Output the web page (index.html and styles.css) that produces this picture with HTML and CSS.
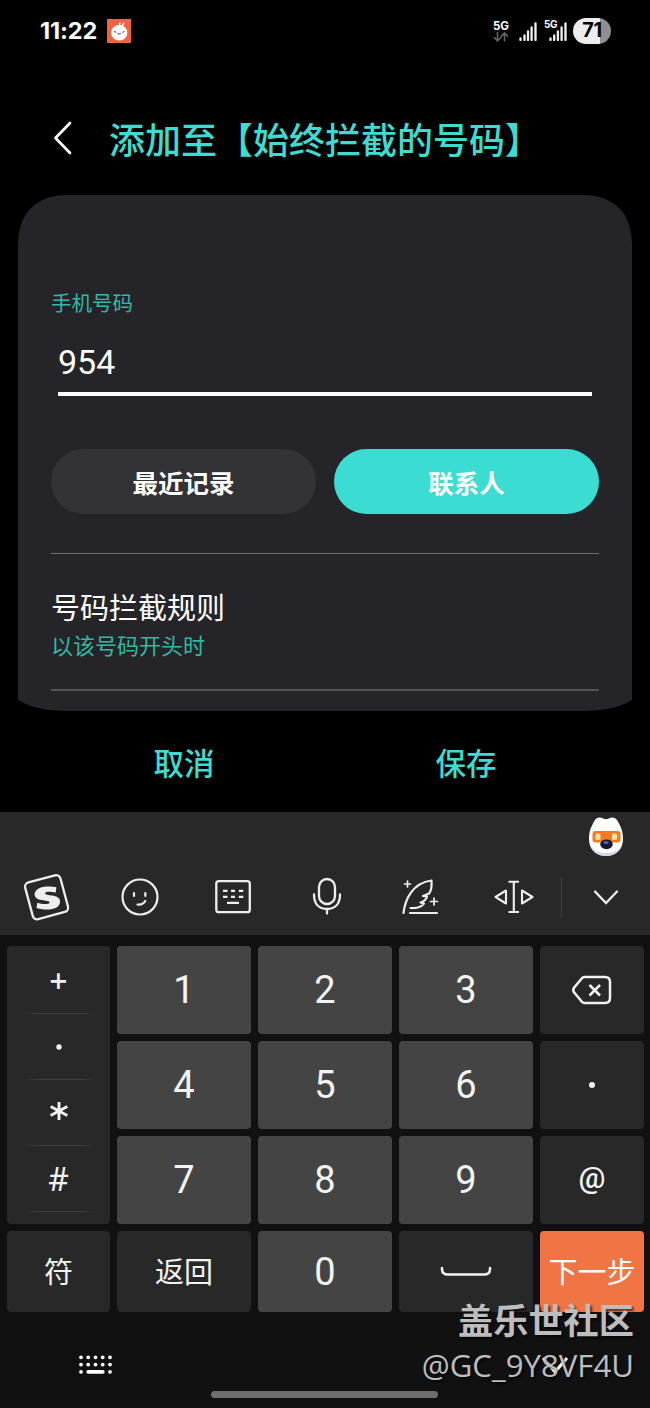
FILE: index.html
```html
<!DOCTYPE html>
<html lang="zh-CN">
<head>
<meta charset="utf-8">
<title>添加至【始终拦截的号码】</title>
<link rel="stylesheet" href="styles.css">
</head>
<body>
<main class="phone">
  <header class="status">
    <span class="time">11:22</span>
    <svg class="app-badge" width="24" height="24" viewBox="0 0 24 24"><rect width="24" height="24" fill="#ec6440"/><path d="M12 8 12.800 4M15 8 16.500 4.300" stroke="#fff" stroke-width="1.600" stroke-linecap="round"/><ellipse cx="12.2" cy="13.7" rx="8.1" ry="7.7" fill="#fff"/><path d="M7 12.5l2.2.8M17.4 12.5l-2.2.8M10.6 14.5q1.6 1 3.2 0" stroke="#49343a" stroke-width="1" fill="none"/></svg>
    <div class="indicators">
      <div class="net"><span class="gen">5G</span><svg width="16" height="10" viewBox="0 0 16 10"><path d="M4.5 0v8.5M1 5.2l3.5 3.6L8 5.2M11.5 9.500V1M8 4.600 11.500 1 15 4.600" fill="none" stroke="#666" stroke-width="1.6"/></svg></div>
      <svg class="bars" width="18" height="19" viewBox="0 0 18 19"><path d="M1.500 16.500v1.500M5.500 13.500V18M9 9.500V18M12.600 5.500V18M16.500 1.500V18" stroke="#f2f2f2" stroke-width="2.300" stroke-linecap="round"/></svg>
      <div class="sim2"><span class="gen2">5G</span><svg width="18" height="19" viewBox="0 0 18 19"><path d="M1.500 16.500v1.500M5.200 13.500V18M8.900 9.500V18M12.600 5.500V18M16.500 1.500V18" stroke="#f2f2f2" stroke-width="2.300" stroke-linecap="round"/></svg></div>
      <div class="battery">71</div>
    </div>
  </header>

  <div class="titlebar">
    <svg width="20" height="36" viewBox="0 0 20 36"><path d="M17 3 2.500 18 17 33" fill="none" stroke="#fff" stroke-width="2.700" stroke-linecap="round" stroke-linejoin="round"/></svg>
    <h1 class="title">添加至【始终拦截的号码】</h1>
  </div>

  <section class="card">
    <div class="label">手机号码</div>
    <div class="number">954</div>
    <div class="buttons">
      <div class="pill">最近记录</div>
      <div class="pill pill-primary">联系人</div>
    </div>
    <div class="rule">
      <div class="rule-title">号码拦截规则</div>
      <div class="rule-value">以该号码开头时</div>
    </div>
  </section>

  <div class="actions"><span>取消</span><span>保存</span></div>

  <section class="toolbar">
    <div class="mascot-row">
      <svg width="36" height="40" viewBox="0 0 36 40"><path d="M18 2.300C20 2.300 21.500.5 24.500.5c3.500 0 5 3 7 7C34 12 35.300 17 35 23c-.5 10-8 16-17 16S1.500 33 1 23C.7 17 2 12 4.500 7.500c2-4 3.500-7 7-7 3 0 4.500 1.800 6.500 1.800z" fill="#fff"/><path d="M2 28c3 6 9 8 16 8s13-2 16-8c-2 7-8 11-16 11S4 35 2 28z" fill="#cfd7ea"/><rect x="4.500" y="14" width="28" height="11.500" rx="3" fill="#f47a23"/><rect x="7.500" y="16.500" width="5" height="6.500" rx="1.500" fill="#ffe2a5"/><rect x="24" y="16.500" width="5" height="6.500" rx="1.500" fill="#ffe2a5"/><ellipse cx="18.500" cy="27.300" rx="6.200" ry="4.900" fill="#15183e"/><ellipse cx="18" cy="25.500" rx="2.700" ry="1.500" fill="#626780"/></svg>
    </div>
    <div class="tools">
      <svg width="50" height="50" viewBox="0 0 50 50"><rect x="7.300" y="6.200" width="36.500" height="38" rx="4.500" transform="rotate(-15 25.500 25)" fill="none" stroke="#eee" stroke-width="2.300"/><path transform="translate(.8 .7)" d="M34.600 14.500 34 19.800C29 18.600 23.500 18.600 23.300 20.500c-.2 1.500 3.500 1.600 7.600 2.400 5.500 1 7.700 3.300 7.300 6.700-.6 5-5.700 7.300-12.700 7.300-4.800 0-8.600-.8-10.800-1.600l.8-5.300c4.500 1.700 12 1.900 12.300-.2.200-1.600-4-1.600-8-2.400-5.200-1-7.300-3.200-7-6.200.6-5 6-7.500 13.500-7.500 3.600 0 6.500.3 8.300.8z" fill="#eee"/></svg>
      <svg width="50" height="50" viewBox="0 0 50 50"><g fill="none" stroke="#eee" stroke-width="2.200" stroke-linecap="round"><circle cx="25" cy="25" r="17.500"/><path d="M19 21v3M30.300 21v3M22.500 32.500q5.500.6 7.800-3.500"/></g></svg>
      <svg width="50" height="50" viewBox="0 0 50 50"><g fill="none" stroke="#eee" stroke-width="2.300"><rect x="8.300" y="9.200" width="33.500" height="31" rx="2.500"/><path d="M15 18.900h4.500M23 18.900h4M30.800 18.900h4.500M15 24.800h4.500M23 24.800h4M30.800 24.800h4.500M19 30.900h12"/></g></svg>
      <svg width="50" height="50" viewBox="0 0 50 50"><g fill="none" stroke="#eee" stroke-width="2.300" stroke-linecap="round"><rect x="17" y="7" width="16" height="25" rx="8"/><path d="M12 22.500C12 32 17 37 25 37s13-5 13-14.500M25 37v4.500"/></g></svg>
      <svg width="50" height="50" viewBox="0 0 50 50"><g fill="none" stroke="#eee" stroke-width="2.200" stroke-linecap="round" stroke-linejoin="round"><path d="M8.500 41C10 28 17 11 36.500 8.500 37 15 36 19 34 21.500l-6 2.500 4 .5c-1 3.500-3 5-6.500 6l3.500 1c-2.500 4-7 5-13.500 4.500M15 41h27"/><path d="M12.500 9v6M9.500 12h6M39 26v7M35.500 29.500h7" stroke-width="1.700"/></g></svg>
      <svg width="50" height="50" viewBox="0 0 50 50"><g fill="none" stroke="#eee" stroke-width="2.100" stroke-linejoin="round"><path d="M19.500 9.700h10.500M19.500 40h10.500M24.800 9.700V40M17 18.500v13L6.500 25zM33 18.500v13L43.500 25z"/></g></svg>
      <i class="tool-line"></i>
      <svg width="50" height="50" viewBox="0 0 50 50"><path d="M14 19.500 25 31l11-11.500" fill="none" stroke="#eee" stroke-width="2.300" stroke-linecap="round"/></svg>
    </div>
  </section>

  <section class="keyboard">
    <div class="keys">
      <div class="side">
        <span>+</span><span><svg width="8" height="8" viewBox="0 0 8 8"><circle cx="4" cy="4" r="2.700" fill="#f3f3f3"/></svg></span><span><svg class="star" width="20" height="20" viewBox="0 0 20 20"><path d="M10 1v18M1.700 5.500l16.600 9M18.300 5.500l-16.600 9" stroke="#f3f3f3" stroke-width="2.900"/></svg></span><span class="hash">#</span>
      </div>
      <div class="key">1</div><div class="key">2</div><div class="key">3</div>
      <div class="key dark"><svg width="42" height="32" viewBox="0 0 42 32"><path d="M13.500 3H34q5 0 5 5v16q0 5-5 5H13.500Q12 29 10.500 27.300L3 18.300Q1.500 16 3 13.700L10.500 4.700Q12 3 13.500 3zM18.500 11 29 21.500M29 11 18.500 21.500" fill="none" stroke="#f3f3f3" stroke-width="2.500"/></svg></div>
      <div class="key">4</div><div class="key">5</div><div class="key">6</div>
      <div class="key dark"><svg width="8" height="8" viewBox="0 0 8 8"><circle cx="4" cy="4" r="3" fill="#f3f3f3"/></svg></div>
      <div class="key">7</div><div class="key">8</div><div class="key">9</div>
      <div class="key dark at">@</div>
      <div class="key dark cjk">符</div><div class="key dark cjk">返回</div><div class="key">0</div>
      <div class="key dark"><svg width="52" height="12" viewBox="0 0 52 12"><path d="M2 2v1q0 5.500 6 5.500h36q6 0 6-5.500V2" fill="none" stroke="#f3f3f3" stroke-width="2.500" stroke-linecap="round"/></svg></div>
      <div class="key next cjk">下一步</div>
    </div>
    <div class="navbar">
      <svg width="34" height="20" viewBox="0 0 34 20"><path d="M2 2.300h.01M9.200 2.300h.01M16.500 2.300h.01M23.700 2.300h.01M31 2.300h.01M2 9.600h.01M9.200 9.600h.01M16.500 9.600h.01M23.700 9.600h.01M31 9.600h.01M2 16.800h.01M9.200 16.800h14.600M31 16.800h.01" stroke="#fff" stroke-width="3.800" stroke-linecap="round"/></svg>
      <svg class="nav-down" width="28" height="20" viewBox="0 0 28 20"><path d="M2 3l12 14L26 3" fill="none" stroke="#fff" stroke-width="3"/></svg>
    </div>
    <div class="gesture"></div>
  </section>

  <div class="watermark">
    <div class="wm-name">盖乐世社区</div>
    <div class="wm-user">@GC_9Y8VF4U</div>
  </div>
</main>
</body>
</html>
```
FILE: styles.css
```css
* { box-sizing: border-box; }
body { margin: 0; background: #000; }
.phone {
  position: relative;
  width: 650px;
  height: 1408px;
  overflow: hidden;
  background: #000;
  color: #fff;
  font-family: Roboto, "Noto Sans CJK SC", sans-serif;
}

.status { display: flex; align-items: center; height: 61px; padding: 0 39px 0 40px; }
.time { width: 67px; font: 700 23.500px/28px Inter, sans-serif; letter-spacing: -0.100px; white-space: nowrap; }
.indicators { display: flex; align-items: center; margin-left: auto; }
.net { display: flex; flex-direction: column; width: 26px; height: 22px; }
.gen, .gen2 { font: 700 11.500px/12px Inter, sans-serif; }
.gen2 { width: 14px; margin-top: -3px; font-size: 10px; line-height: 10px; letter-spacing: -0.300px; }
.bars { margin-top: 2px; }
.sim2 { display: flex; margin: 2px 6px 0 7px; }
.sim2 svg { margin-left: -9px; }
.battery {
  width: 38px; height: 26px; border-radius: 13px;
  background: linear-gradient(90deg, #ededed 71%, #8f8f8f 71%);
  color: #050505; text-align: center;
  font: 700 20px/25px Inter, sans-serif; letter-spacing: -0.500px;
}

.titlebar { display: flex; align-items: center; gap: 36px; height: 134px; padding: 24px 0 0 53px; }
.titlebar svg { margin-top: -5px; }
.title { margin: 4px 0 0; color: #3edbd0; font-size: 36px; line-height: 50px; font-weight: 500; white-space: nowrap; }

.card {
  width: 614px; height: 516px; margin: 0 18px; padding: 95px 33px 0;
  background: #252529;
  clip-path: path("M0 50C0 18 18 0 50 0H564C596 0 614 18 614 50V505Q596 516 565 516H49Q18 516 0 505Z");
}
.label { color: #31b8a7; font-size: 20.500px; line-height: 28px; }
.number { height: 59px; margin: 19px 7px 0; border-bottom: 4px solid #fff; font-size: 34px; line-height: 50px; }
.buttons { display: grid; grid-template-columns: 265px 265px; gap: 18px; margin-top: 53px; }
.pill { height: 65px; border-radius: 33px; background: #323237; text-align: center; font-size: 25.500px; line-height: 70px; font-weight: 700; }
.pill-primary { background: #3bddd3; }
.rule { margin-top: 39px; height: 138px; padding-top: 35px; border-top: 1px solid #6e6e71; border-bottom: 2px solid #545457; }
.rule-title { font-size: 29px; line-height: 40px; }
.rule-value { color: #31b8a0; font-size: 22px; line-height: 30px; margin-top: 3px; }

.actions { display: flex; height: 101px; padding: 0 43px; }
.actions span { flex: 1; text-align: center; color: #3edbd0; font-size: 30.500px; line-height: 108px; font-weight: 500; }

.toolbar { height: 123px; background: #282828; }
.mascot-row { display: flex; justify-content: flex-end; height: 60px; padding: 5px 26px 0 0; }
.tools { display: flex; align-items: center; height: 50px; padding-left: 21px; }
.tools svg { flex: none; margin-right: 43.500px; }
.tools svg:nth-of-type(6) { margin-right: 22.500px; }
.tools svg:last-child { margin-right: 0; }
.tool-line { flex: none; width: 1px; height: 40px; margin-right: 19px; background: #414141; }

.keyboard { height: 473px; padding: 11px 7px 0; background: #111; }
.keys {
  display: grid; gap: 7px;
  grid-template-columns: 103px 134px 134px 134px 104px;
  grid-template-rows: 88px 88px 88px 81px;
}
.key, .side { border-radius: 4px; color: #f3f3f3; }
.key { display: flex; align-items: center; justify-content: center; background: #444; font-size: 38px; line-height: 44px; white-space: nowrap; }
.key.dark { background: #282828; }
.key.next { background: #f17445; color: #fff; }
.key.cjk { padding-top: 2px; font-size: 29px; }
.key.at { padding-bottom: 4px; font: 500 30px/36px Roboto, sans-serif; }
.side { grid-row: span 3; padding-top: 2px; background: #282828; }
.side span {
  display: flex; align-items: center; justify-content: center; height: 66px;
  background: linear-gradient(90deg, transparent 14%, #3e3e3e 30%, #3e3e3e 72%, transparent 88%) bottom / 100% 1px no-repeat;
  font: 500 32px/40px "Noto Sans", sans-serif;
}
.side .hash { font-weight: 400; }
.star { margin-top: -5px; }
.navbar { display: flex; align-items: center; justify-content: space-between; height: 24px; margin-top: 41px; padding: 0 74px 0 72px; }
.gesture { width: 227px; height: 7px; margin: 14px auto 0 204px; border-radius: 4px; background: #6d6d6d; }

.watermark { position: absolute; right: 16px; top: 1294px; text-align: right; color: #bdbdbd; text-shadow: 2px 2px 2px rgba(0, 0, 0, .6); }
.wm-name { font: 700 35.200px/50px "Noto Sans CJK SC", sans-serif; }
.wm-user { font: 400 31.200px/42px "Open Sans", sans-serif; white-space: nowrap; }
```
